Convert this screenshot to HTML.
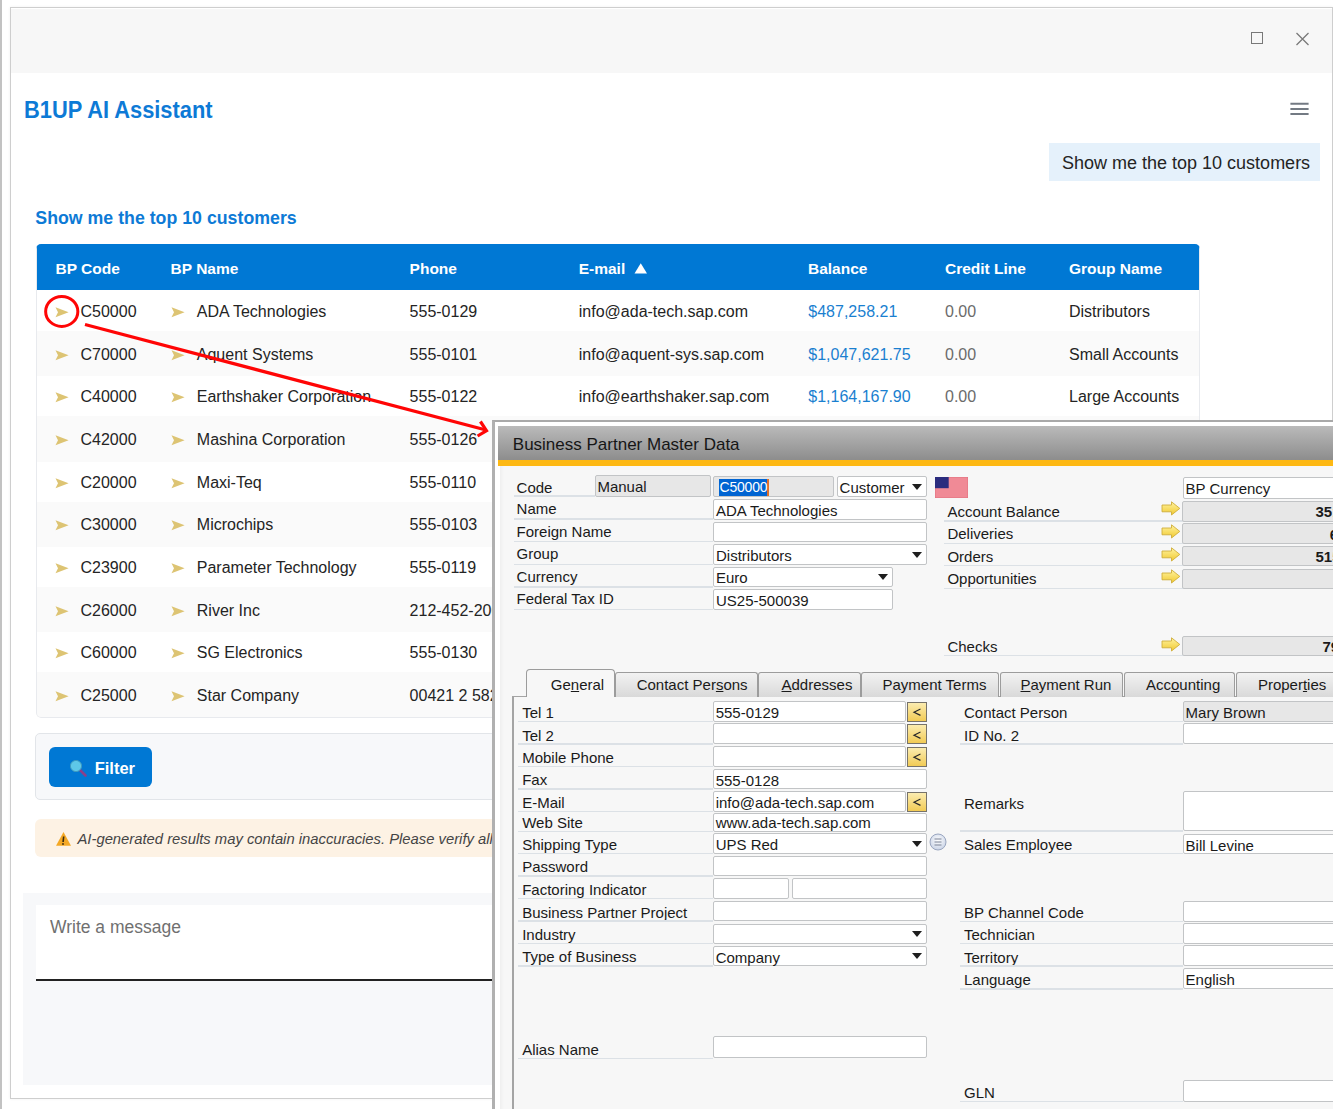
<!DOCTYPE html>
<html><head><meta charset="utf-8">
<style>
*{box-sizing:border-box;margin:0;padding:0}
html,body{width:1333px;height:1109px;overflow:hidden;background:#fff;font-family:"Liberation Sans",sans-serif;color:#242424}
.a{position:absolute}
.t{position:absolute;white-space:nowrap;line-height:1}
/* chat window */
#leftline{left:0;top:0;width:2px;height:1109px;background:#c2c2c2}
#win{left:9.5px;top:7.1px;width:1323.7px;height:1091.9px;border:1.6px solid #cecece;background:#fff;box-shadow:0 0 3px rgba(0,0,0,0.06)}
#titlebar{left:11px;top:8.6px;width:1320.8px;height:64.4px;background:#f7f7f7}
.hd{font-weight:bold;font-size:15.5px;color:#fff}
.bd{font-size:16px;color:#242424}
.arr{position:absolute;width:14px;height:11px}
.row{position:absolute;left:37px;width:1161px;height:42.67px}
.g{background:#fafafa}
/* sap */
.sl{position:absolute;font-size:15px;color:#1a1a1a;white-space:nowrap;line-height:1}
.ul{position:absolute;height:1.4px;background:#dce1e6}
.fld{position:absolute;background:#fff;border:1.6px solid #c2c4c6;border-radius:2px}
.fg{background:#e7e7e7}
.ft{position:absolute;font-size:15px;color:#1a1a1a;white-space:nowrap;line-height:1}
.dd{position:absolute;width:0;height:0;border-left:5.6px solid transparent;border-right:5.6px solid transparent;border-top:6.6px solid #1e1e1e}
.yb{position:absolute;width:20px;height:20px;background:linear-gradient(#fbecb0,#f2cb55);border:1.4px solid #77736a;font-size:13px;color:#333;text-align:center;line-height:18px}
.ya{position:absolute;width:19px;height:15px}
.tab{position:absolute;top:673px;height:24px;border:1px solid #a0a0a0;border-bottom:none;border-radius:4px 4px 0 0;background:linear-gradient(#f7f7f7,#dcdcdc);font-size:15px;color:#1a1a1a;text-align:center;line-height:22px;white-space:nowrap}
</style></head><body>
<div id="leftline" class="a"></div>
<div id="win" class="a"></div>
<div id="titlebar" class="a"></div>
<!-- window buttons -->
<div class="a" style="left:1251.4px;top:32.2px;width:12.1px;height:12.3px;border:1.6px solid #787878"></div>
<svg class="a" style="left:1295px;top:31.5px" width="15" height="14" viewBox="0 0 15 14"><path d="M1.5 1 L13.5 13 M13.5 1 L1.5 13" stroke="#7a7a7a" stroke-width="1.3"/></svg>

<div class="t" style="left:24px;top:99.8px;font-size:21.85px;font-weight:bold;color:#0d7ad6;transform:scaleY(1.09);transform-origin:0 18.3px">B1UP AI Assistant</div>
<svg class="a" style="left:1289px;top:101px" width="21" height="16" viewBox="0 0 21 16"><path d="M1.4 2.8H19.6M1.4 8H19.6M1.4 13H19.6" stroke="#737a83" stroke-width="2"/></svg>

<div class="a" style="left:1049px;top:143.2px;width:271px;height:37.6px;background:#e5f1fb"></div>
<div class="t" style="left:1062px;top:154px;font-size:18px;color:#242424">Show me the top 10 customers</div>

<div class="t" style="left:35.3px;top:210px;font-size:17.75px;font-weight:bold;color:#0d7ad6;transform:scaleY(1.05);transform-origin:0 15px">Show me the top 10 customers</div>

<!-- TABLE -->
<div class="a" style="left:35.5px;top:244px;width:1164.3px;height:473.5px;border-radius:5px;overflow:hidden;background:#fff">
<div class="a" style="left:0;width:1164.3px;top:86.87px;height:45.47px;background:#fafafa"></div>
<div class="a" style="left:0;width:1164.3px;top:172.21px;height:45.47px;background:#fafafa"></div>
<div class="a" style="left:0;width:1164.3px;top:257.55px;height:45.47px;background:#fafafa"></div>
<div class="a" style="left:0;width:1164.3px;top:342.89px;height:45.47px;background:#fafafa"></div>
<div class="a" style="left:0;width:1164.3px;top:428.23px;height:45.47px;background:#fafafa"></div>
<div class="a" style="left:0;top:0;width:1164.3px;height:46.3px;background:#0078d4"></div>
<div class="a" style="left:0;top:0;width:1164.3px;height:473.5px;border:1.5px solid #e8eaee;border-top:none;border-radius:0 0 5px 5px;"></div>
</div>
<div class="t hd" style="left:55.5px;top:260.5px">BP Code</div>
<div class="t hd" style="left:170.6px;top:260.5px">BP Name</div>
<div class="t hd" style="left:409.6px;top:260.5px">Phone</div>
<div class="t hd" style="left:578.7px;top:260.5px">E-mail</div>
<div class="t hd" style="left:808px;top:260.5px">Balance</div>
<div class="t hd" style="left:945px;top:260.5px">Credit Line</div>
<div class="t hd" style="left:1069px;top:260.5px">Group Name</div>
<svg class="a" style="left:633.7px;top:263.2px" width="13.5" height="11" viewBox="0 0 13.5 11"><path d="M0.5 10.5 L6.75 0.3 L13 10.5 Z" fill="#fff"/></svg>
<svg class="a" style="left:55px;top:306.83px" width="14" height="11" viewBox="0 0 14 11"><path d="M0.5 0.3 L13.6 5.3 L0.5 10.2 L3 5.3 Z" fill="#ddc473"/></svg>
<svg class="a" style="left:171px;top:306.83px" width="14" height="11" viewBox="0 0 14 11"><path d="M0.5 0.3 L13.6 5.3 L0.5 10.2 L3 5.3 Z" fill="#ddc473"/></svg>
<div class="t bd" style="left:80.5px;top:303.83px">C50000</div>
<div class="t bd" style="left:196.8px;top:303.83px">ADA Technologies</div>
<div class="t bd" style="left:409.6px;top:303.83px">555-0129</div>
<div class="t bd" style="left:578.8px;top:303.83px">info@ada-tech.sap.com</div>
<div class="t bd" style="left:808.3px;top:303.83px;color:#1a7fd0">$487,258.21</div>
<div class="t bd" style="left:945px;top:303.83px;color:#6b6b6b">0.00</div>
<div class="t bd" style="left:1069px;top:303.83px">Distributors</div>
<svg class="a" style="left:55px;top:349.50px" width="14" height="11" viewBox="0 0 14 11"><path d="M0.5 0.3 L13.6 5.3 L0.5 10.2 L3 5.3 Z" fill="#ddc473"/></svg>
<svg class="a" style="left:171px;top:349.50px" width="14" height="11" viewBox="0 0 14 11"><path d="M0.5 0.3 L13.6 5.3 L0.5 10.2 L3 5.3 Z" fill="#ddc473"/></svg>
<div class="t bd" style="left:80.5px;top:346.50px">C70000</div>
<div class="t bd" style="left:196.8px;top:346.50px">Aquent Systems</div>
<div class="t bd" style="left:409.6px;top:346.50px">555-0101</div>
<div class="t bd" style="left:578.8px;top:346.50px">info@aquent-sys.sap.com</div>
<div class="t bd" style="left:808.3px;top:346.50px;color:#1a7fd0">$1,047,621.75</div>
<div class="t bd" style="left:945px;top:346.50px;color:#6b6b6b">0.00</div>
<div class="t bd" style="left:1069px;top:346.50px">Small Accounts</div>
<svg class="a" style="left:55px;top:392.18px" width="14" height="11" viewBox="0 0 14 11"><path d="M0.5 0.3 L13.6 5.3 L0.5 10.2 L3 5.3 Z" fill="#ddc473"/></svg>
<svg class="a" style="left:171px;top:392.18px" width="14" height="11" viewBox="0 0 14 11"><path d="M0.5 0.3 L13.6 5.3 L0.5 10.2 L3 5.3 Z" fill="#ddc473"/></svg>
<div class="t bd" style="left:80.5px;top:389.18px">C40000</div>
<div class="t bd" style="left:196.8px;top:389.18px">Earthshaker Corporation</div>
<div class="t bd" style="left:409.6px;top:389.18px">555-0122</div>
<div class="t bd" style="left:578.8px;top:389.18px">info@earthshaker.sap.com</div>
<div class="t bd" style="left:808.3px;top:389.18px;color:#1a7fd0">$1,164,167.90</div>
<div class="t bd" style="left:945px;top:389.18px;color:#6b6b6b">0.00</div>
<div class="t bd" style="left:1069px;top:389.18px">Large Accounts</div>
<svg class="a" style="left:55px;top:434.84px" width="14" height="11" viewBox="0 0 14 11"><path d="M0.5 0.3 L13.6 5.3 L0.5 10.2 L3 5.3 Z" fill="#ddc473"/></svg>
<svg class="a" style="left:171px;top:434.84px" width="14" height="11" viewBox="0 0 14 11"><path d="M0.5 0.3 L13.6 5.3 L0.5 10.2 L3 5.3 Z" fill="#ddc473"/></svg>
<div class="t bd" style="left:80.5px;top:431.84px">C42000</div>
<div class="t bd" style="left:196.8px;top:431.84px">Mashina Corporation</div>
<div class="t bd" style="left:409.6px;top:431.84px">555-0126</div>
<div class="t bd" style="left:578.8px;top:431.84px">info@mashina.sap.com</div>
<div class="t bd" style="left:808.3px;top:431.84px;color:#1a7fd0">$1,030,441.30</div>
<div class="t bd" style="left:945px;top:431.84px;color:#6b6b6b">0.00</div>
<div class="t bd" style="left:1069px;top:431.84px">Large Accounts</div>
<svg class="a" style="left:55px;top:477.51px" width="14" height="11" viewBox="0 0 14 11"><path d="M0.5 0.3 L13.6 5.3 L0.5 10.2 L3 5.3 Z" fill="#ddc473"/></svg>
<svg class="a" style="left:171px;top:477.51px" width="14" height="11" viewBox="0 0 14 11"><path d="M0.5 0.3 L13.6 5.3 L0.5 10.2 L3 5.3 Z" fill="#ddc473"/></svg>
<div class="t bd" style="left:80.5px;top:474.51px">C20000</div>
<div class="t bd" style="left:196.8px;top:474.51px">Maxi-Teq</div>
<div class="t bd" style="left:409.6px;top:474.51px">555-0110</div>
<div class="t bd" style="left:578.8px;top:474.51px">info@maxi-teq.sap.com</div>
<div class="t bd" style="left:808.3px;top:474.51px;color:#1a7fd0">$1,114,050.46</div>
<div class="t bd" style="left:945px;top:474.51px;color:#6b6b6b">0.00</div>
<div class="t bd" style="left:1069px;top:474.51px">Large Accounts</div>
<svg class="a" style="left:55px;top:520.19px" width="14" height="11" viewBox="0 0 14 11"><path d="M0.5 0.3 L13.6 5.3 L0.5 10.2 L3 5.3 Z" fill="#ddc473"/></svg>
<svg class="a" style="left:171px;top:520.19px" width="14" height="11" viewBox="0 0 14 11"><path d="M0.5 0.3 L13.6 5.3 L0.5 10.2 L3 5.3 Z" fill="#ddc473"/></svg>
<div class="t bd" style="left:80.5px;top:517.19px">C30000</div>
<div class="t bd" style="left:196.8px;top:517.19px">Microchips</div>
<div class="t bd" style="left:409.6px;top:517.19px">555-0103</div>
<div class="t bd" style="left:578.8px;top:517.19px">info@microchips.sap.com</div>
<div class="t bd" style="left:808.3px;top:517.19px;color:#1a7fd0">$1,221,305.68</div>
<div class="t bd" style="left:945px;top:517.19px;color:#6b6b6b">0.00</div>
<div class="t bd" style="left:1069px;top:517.19px">Large Accounts</div>
<svg class="a" style="left:55px;top:562.86px" width="14" height="11" viewBox="0 0 14 11"><path d="M0.5 0.3 L13.6 5.3 L0.5 10.2 L3 5.3 Z" fill="#ddc473"/></svg>
<svg class="a" style="left:171px;top:562.86px" width="14" height="11" viewBox="0 0 14 11"><path d="M0.5 0.3 L13.6 5.3 L0.5 10.2 L3 5.3 Z" fill="#ddc473"/></svg>
<div class="t bd" style="left:80.5px;top:559.86px">C23900</div>
<div class="t bd" style="left:196.8px;top:559.86px">Parameter Technology</div>
<div class="t bd" style="left:409.6px;top:559.86px">555-0119</div>
<div class="t bd" style="left:578.8px;top:559.86px">info@parameter.sap.com</div>
<div class="t bd" style="left:808.3px;top:559.86px;color:#1a7fd0">$1,044,917.22</div>
<div class="t bd" style="left:945px;top:559.86px;color:#6b6b6b">0.00</div>
<div class="t bd" style="left:1069px;top:559.86px">Large Accounts</div>
<svg class="a" style="left:55px;top:605.53px" width="14" height="11" viewBox="0 0 14 11"><path d="M0.5 0.3 L13.6 5.3 L0.5 10.2 L3 5.3 Z" fill="#ddc473"/></svg>
<svg class="a" style="left:171px;top:605.53px" width="14" height="11" viewBox="0 0 14 11"><path d="M0.5 0.3 L13.6 5.3 L0.5 10.2 L3 5.3 Z" fill="#ddc473"/></svg>
<div class="t bd" style="left:80.5px;top:602.53px">C26000</div>
<div class="t bd" style="left:196.8px;top:602.53px">River Inc</div>
<div class="t bd" style="left:409.6px;top:602.53px">212-452-2000</div>
<div class="t bd" style="left:578.8px;top:602.53px">info@river.sap.com</div>
<div class="t bd" style="left:808.3px;top:602.53px;color:#1a7fd0">$1,061,221.05</div>
<div class="t bd" style="left:945px;top:602.53px;color:#6b6b6b">0.00</div>
<div class="t bd" style="left:1069px;top:602.53px">Large Accounts</div>
<svg class="a" style="left:55px;top:648.20px" width="14" height="11" viewBox="0 0 14 11"><path d="M0.5 0.3 L13.6 5.3 L0.5 10.2 L3 5.3 Z" fill="#ddc473"/></svg>
<svg class="a" style="left:171px;top:648.20px" width="14" height="11" viewBox="0 0 14 11"><path d="M0.5 0.3 L13.6 5.3 L0.5 10.2 L3 5.3 Z" fill="#ddc473"/></svg>
<div class="t bd" style="left:80.5px;top:645.20px">C60000</div>
<div class="t bd" style="left:196.8px;top:645.20px">SG Electronics</div>
<div class="t bd" style="left:409.6px;top:645.20px">555-0130</div>
<div class="t bd" style="left:578.8px;top:645.20px">info@sg-elec.sap.com</div>
<div class="t bd" style="left:808.3px;top:645.20px;color:#1a7fd0">$1,090,511.08</div>
<div class="t bd" style="left:945px;top:645.20px;color:#6b6b6b">0.00</div>
<div class="t bd" style="left:1069px;top:645.20px">Large Accounts</div>
<svg class="a" style="left:55px;top:690.87px" width="14" height="11" viewBox="0 0 14 11"><path d="M0.5 0.3 L13.6 5.3 L0.5 10.2 L3 5.3 Z" fill="#ddc473"/></svg>
<svg class="a" style="left:171px;top:690.87px" width="14" height="11" viewBox="0 0 14 11"><path d="M0.5 0.3 L13.6 5.3 L0.5 10.2 L3 5.3 Z" fill="#ddc473"/></svg>
<div class="t bd" style="left:80.5px;top:687.87px">C25000</div>
<div class="t bd" style="left:196.8px;top:687.87px">Star Company</div>
<div class="t bd" style="left:409.6px;top:687.87px">00421 2 5822 1111</div>
<div class="t bd" style="left:578.8px;top:687.87px">info@star.sap.com</div>
<div class="t bd" style="left:808.3px;top:687.87px;color:#1a7fd0">$1,120,314.40</div>
<div class="t bd" style="left:945px;top:687.87px;color:#6b6b6b">0.00</div>
<div class="t bd" style="left:1069px;top:687.87px">Large Accounts</div>

<!-- SAP -->

<!-- filter -->
<div class="a" style="left:35.3px;top:733.3px;width:1164px;height:67px;background:#f7f8fa;border:1px solid #e2e5e9;border-radius:5px"></div>
<div class="a" style="left:48.5px;top:746.5px;width:103.6px;height:40.4px;background:#0078d4;border-radius:6px"></div>
<svg class="a" style="left:66px;top:756px" width="22" height="22" viewBox="0 0 22 22"><path d="M13.5 13.5 L19.5 19.5" stroke="#8a3f8a" stroke-width="2.6" stroke-linecap="round"/><circle cx="10" cy="10" r="5.6" fill="#5ec8e8" stroke="#3d9ac0" stroke-width="1"/></svg>
<div class="t" style="left:94.7px;top:759.5px;font-size:16.5px;font-weight:bold;color:#fff">Filter</div>
<!-- warning -->
<div class="a" style="left:35.3px;top:818.7px;width:1164px;height:38.3px;background:#fdf2e4;border-radius:6px"></div>
<svg class="a" style="left:55px;top:831px" width="17" height="16" viewBox="0 0 17 16"><path d="M8.5 1 L16 14.8 L1 14.8 Z" fill="#f4a825"/><path d="M8.7 5.5 L8.1 11" stroke="#3a2a10" stroke-width="1.6"/><circle cx="8" cy="13" r="0.9" fill="#3a2a10"/></svg>
<div class="t" style="left:77.5px;top:831.7px;font-size:14.8px;font-style:italic;color:#444444">AI-generated results may contain inaccuracies. Please verify all important information.</div>
<!-- message -->
<div class="a" style="left:23.2px;top:893.4px;width:1297px;height:191.6px;background:#f7f8fa"></div>
<div class="a" style="left:35.6px;top:905px;width:1272px;height:76px;background:#fff;border-bottom:2.5px solid #222"></div>
<div class="t" style="left:50px;top:919px;font-size:17.5px;color:#707070">Write a message</div>

<div class="a" style="left:492.4px;top:419.9px;width:860px;height:700px;background:#fff;border-left:3.3px solid #b0b0b0;border-top:2.6px solid #a9a9a9"></div>
<div class="a" style="left:498.4px;top:425.6px;width:840px;height:34.2px;background:linear-gradient(#bababa,#8d8d8d)"></div>
<div class="a" style="left:498.4px;top:459.8px;width:840px;height:6.2px;background:#fdb813"></div>
<div class="t" style="left:512.8px;top:436.41px;font-size:17px;color:#161616">Business Partner Master Data</div>
<div class="a" style="left:499.9px;top:466px;width:840px;height:650px;background:#f7f7f7"></div>
<div class="a" style="left:499.9px;top:466px;width:4.5px;height:650px;background:linear-gradient(90deg,#efefef,#f7f7f7)"></div>
<div class="sl" style="left:516.6px;top:480.40px;">Code</div>
<div class="sl" style="left:516.6px;top:500.80px;">Name</div>
<div class="sl" style="left:516.6px;top:523.50px;">Foreign Name</div>
<div class="sl" style="left:516.6px;top:546.10px;">Group</div>
<div class="sl" style="left:516.6px;top:568.70px;">Currency</div>
<div class="sl" style="left:516.6px;top:591.20px;">Federal Tax ID</div>
<div class="ul" style="left:513.6px;top:495.25px;width:81.40px"></div>
<div class="ul" style="left:513.6px;top:518.25px;width:199.40px"></div>
<div class="ul" style="left:513.6px;top:541.05px;width:199.40px"></div>
<div class="ul" style="left:513.6px;top:563.65px;width:199.40px"></div>
<div class="ul" style="left:513.6px;top:586.15px;width:199.40px"></div>
<div class="ul" style="left:513.6px;top:608.75px;width:199.40px"></div>
<div class="fld fg" style="left:594.60px;top:475.30px;width:116.60px;height:21.90px"></div>
<div class="ft" style="left:597.40px;top:479.10px;color:#1a1a1a;">Manual</div>
<div class="fld fg" style="left:713.20px;top:475.90px;width:121.00px;height:21.50px"></div>
<div class="a" style="left:719.3px;top:478.8px;width:48.3px;height:16.8px;background:#0064d2"></div>
<div class="a" style="left:767.2px;top:478.8px;width:1.5px;height:16.8px;background:#e0702a"></div>
<div class="ft" style="left:719.5px;top:479.95px;color:#fff;font-size:14px;letter-spacing:-0.2px">C50000</div>
<div class="fld" style="left:836.80px;top:475.90px;width:90.50px;height:21.50px"></div>
<div class="ft" style="left:839.60px;top:479.70px;color:#1a1a1a;">Customer</div>
<div class="dd" style="left:912.10px;top:483.75px"></div>
<svg class="a" style="left:935px;top:476.7px" width="33" height="21" viewBox="0 0 33 21"><rect width="33" height="21" fill="#f08a96"/><rect x="0" y="0" width="33" height="21" fill="none" stroke="#e0707e" stroke-width="1"/><rect width="13.7" height="11.2" fill="#2b2c7e"/></svg>
<div class="fld" style="left:713.20px;top:499.20px;width:214.10px;height:20.70px"></div>
<div class="ft" style="left:716.00px;top:503.00px;color:#1a1a1a;">ADA Technologies</div>
<div class="fld" style="left:713.20px;top:521.70px;width:214.10px;height:20.60px"></div>
<div class="fld" style="left:713.20px;top:544.00px;width:214.10px;height:21.10px"></div>
<div class="ft" style="left:716.00px;top:547.80px;color:#1a1a1a;">Distributors</div>
<div class="dd" style="left:912.10px;top:551.65px"></div>
<div class="fld" style="left:713.20px;top:566.50px;width:179.90px;height:20.70px"></div>
<div class="ft" style="left:716.00px;top:570.30px;color:#1a1a1a;">Euro</div>
<div class="dd" style="left:877.90px;top:573.95px"></div>
<div class="fld" style="left:713.20px;top:588.90px;width:179.90px;height:20.90px"></div>
<div class="ft" style="left:716.00px;top:592.70px;color:#1a1a1a;">US25-500039</div>
<div class="fld" style="left:1182.80px;top:477.30px;width:177.90px;height:21.50px"></div>
<div class="ft" style="left:1185.60px;top:481.10px;color:#1a1a1a;">BP Currency</div>
<div class="sl" style="left:947.4px;top:504.30px;">Account Balance</div>
<div class="ul" style="left:944.4px;top:520.35px;width:238.60px"></div>
<svg class="a" style="left:1160.5px;top:501.40px" width="20" height="15" viewBox="0 0 20 15"><defs><linearGradient id="yg" x1="0" y1="0" x2="0" y2="1"><stop offset="0" stop-color="#fff3a0"/><stop offset="1" stop-color="#f1c930"/></linearGradient></defs><path d="M1 4 H10.5 V0.8 L18.8 7.4 L10.5 14 V10.8 H1 Z" fill="url(#yg)" stroke="#cfae3a" stroke-width="0.9"/></svg>
<div class="fld fg" style="left:1182.40px;top:500.90px;width:178.30px;height:20.70px"></div>
<div class="ft" style="left:1315.50px;top:504.10px;font-weight:bold">351,112.96</div>
<div class="sl" style="left:947.4px;top:526.30px;">Deliveries</div>
<div class="ul" style="left:944.4px;top:542.85px;width:238.60px"></div>
<svg class="a" style="left:1160.5px;top:523.90px" width="20" height="15" viewBox="0 0 20 15"><defs><linearGradient id="yg" x1="0" y1="0" x2="0" y2="1"><stop offset="0" stop-color="#fff3a0"/><stop offset="1" stop-color="#f1c930"/></linearGradient></defs><path d="M1 4 H10.5 V0.8 L18.8 7.4 L10.5 14 V10.8 H1 Z" fill="url(#yg)" stroke="#cfae3a" stroke-width="0.9"/></svg>
<div class="fld fg" style="left:1182.40px;top:523.40px;width:178.30px;height:20.70px"></div>
<div class="ft" style="left:1329.80px;top:526.60px;font-weight:bold">6</div>
<div class="sl" style="left:947.4px;top:548.80px;">Orders</div>
<div class="ul" style="left:944.4px;top:565.05px;width:238.60px"></div>
<svg class="a" style="left:1160.5px;top:546.50px" width="20" height="15" viewBox="0 0 20 15"><defs><linearGradient id="yg" x1="0" y1="0" x2="0" y2="1"><stop offset="0" stop-color="#fff3a0"/><stop offset="1" stop-color="#f1c930"/></linearGradient></defs><path d="M1 4 H10.5 V0.8 L18.8 7.4 L10.5 14 V10.8 H1 Z" fill="url(#yg)" stroke="#cfae3a" stroke-width="0.9"/></svg>
<div class="fld fg" style="left:1182.40px;top:546.00px;width:178.30px;height:20.30px"></div>
<div class="ft" style="left:1315.50px;top:549.20px;font-weight:bold">515,212.58</div>
<div class="sl" style="left:947.4px;top:571.30px;">Opportunities</div>
<div class="ul" style="left:944.4px;top:587.65px;width:238.60px"></div>
<svg class="a" style="left:1160.5px;top:569.00px" width="20" height="15" viewBox="0 0 20 15"><defs><linearGradient id="yg" x1="0" y1="0" x2="0" y2="1"><stop offset="0" stop-color="#fff3a0"/><stop offset="1" stop-color="#f1c930"/></linearGradient></defs><path d="M1 4 H10.5 V0.8 L18.8 7.4 L10.5 14 V10.8 H1 Z" fill="url(#yg)" stroke="#cfae3a" stroke-width="0.9"/></svg>
<div class="fld fg" style="left:1182.40px;top:568.50px;width:178.30px;height:20.40px"></div>
<div class="sl" style="left:947.4px;top:638.90px;">Checks</div>
<div class="ul" style="left:944.4px;top:655.05px;width:238.60px"></div>
<svg class="a" style="left:1160.5px;top:636.50px" width="20" height="15" viewBox="0 0 20 15"><defs><linearGradient id="yg" x1="0" y1="0" x2="0" y2="1"><stop offset="0" stop-color="#fff3a0"/><stop offset="1" stop-color="#f1c930"/></linearGradient></defs><path d="M1 4 H10.5 V0.8 L18.8 7.4 L10.5 14 V10.8 H1 Z" fill="url(#yg)" stroke="#cfae3a" stroke-width="0.9"/></svg>
<div class="fld fg" style="left:1182.40px;top:636.00px;width:178.30px;height:20.30px"></div>
<div class="ft" style="left:1322.50px;top:639.20px;font-weight:bold">79,000.00</div>
<div class="a" style="left:512.8px;top:696px;width:830px;height:1.2px;background:#a4a4a4"></div>
<div class="a" style="left:512.3px;top:696px;width:1.5px;height:420px;background:#a4a4a4"></div>
<div class="a" style="left:614.6px;top:672.3px;width:143.00px;height:24.5px;border:1px solid #9c9c9c;border-bottom:none;border-radius:3px 3px 0 0;background:linear-gradient(#f2f2f2,#d9d9d9)"></div>
<div class="sl" style="left:636.7px;top:676.60px">Contact Per<u>s</u>ons</div>
<div class="a" style="left:758.2px;top:672.3px;width:102.60px;height:24.5px;border:1px solid #9c9c9c;border-bottom:none;border-radius:3px 3px 0 0;background:linear-gradient(#f2f2f2,#d9d9d9)"></div>
<div class="sl" style="left:781.5px;top:676.60px"><u>A</u>ddresses</div>
<div class="a" style="left:861.4px;top:672.3px;width:137.60px;height:24.5px;border:1px solid #9c9c9c;border-bottom:none;border-radius:3px 3px 0 0;background:linear-gradient(#f2f2f2,#d9d9d9)"></div>
<div class="sl" style="left:882.5px;top:676.60px">Payment Terms</div>
<div class="a" style="left:999.5px;top:672.3px;width:123.50px;height:24.5px;border:1px solid #9c9c9c;border-bottom:none;border-radius:3px 3px 0 0;background:linear-gradient(#f2f2f2,#d9d9d9)"></div>
<div class="sl" style="left:1020.5px;top:676.60px"><u>P</u>ayment Run</div>
<div class="a" style="left:1123.5px;top:672.3px;width:111.50px;height:24.5px;border:1px solid #9c9c9c;border-bottom:none;border-radius:3px 3px 0 0;background:linear-gradient(#f2f2f2,#d9d9d9)"></div>
<div class="sl" style="left:1146px;top:676.60px">Acc<u>o</u>unting</div>
<div class="a" style="left:1235.5px;top:672.3px;width:109.50px;height:24.5px;border:1px solid #9c9c9c;border-bottom:none;border-radius:3px 3px 0 0;background:linear-gradient(#f2f2f2,#d9d9d9)"></div>
<div class="sl" style="left:1257.9px;top:676.60px">Proper<u>t</u>ies</div>
<div class="a" style="left:526px;top:668.7px;width:88.6px;height:28.8px;border:1px solid #9c9c9c;border-bottom:none;border-radius:4px 4px 0 0;background:#f7f7f7"></div>
<div class="sl" style="left:550.8px;top:677.00px">Ge<u>n</u>eral</div>
<div class="sl" style="left:522.2px;top:705.00px;">Tel 1</div>
<div class="ul" style="left:517.7px;top:720.95px;width:195.30px"></div>
<div class="fld" style="left:712.90px;top:701.00px;width:193.10px;height:21.30px"></div>
<div class="ft" style="left:715.70px;top:704.80px;color:#1a1a1a;">555-0129</div>
<div class="yb" style="left:906.5px;top:702.00px;height:19.80px;width:20.8px"></div>
<svg class="a" style="left:911px;top:706.30px" width="12" height="12" viewBox="0 0 12 12"><path d="M9.5 3 L3 6.2 L9.5 9.4" fill="none" stroke="#2a2a2a" stroke-width="1.2"/></svg>
<div class="sl" style="left:522.2px;top:727.50px;">Tel 2</div>
<div class="ul" style="left:517.7px;top:743.45px;width:195.30px"></div>
<div class="fld" style="left:712.90px;top:723.30px;width:193.10px;height:21.20px"></div>
<div class="yb" style="left:906.5px;top:724.30px;height:19.70px;width:20.8px"></div>
<svg class="a" style="left:911px;top:728.60px" width="12" height="12" viewBox="0 0 12 12"><path d="M9.5 3 L3 6.2 L9.5 9.4" fill="none" stroke="#2a2a2a" stroke-width="1.2"/></svg>
<div class="sl" style="left:522.2px;top:750.00px;">Mobile Phone</div>
<div class="ul" style="left:517.7px;top:765.95px;width:195.30px"></div>
<div class="fld" style="left:712.90px;top:745.90px;width:193.10px;height:21.30px"></div>
<div class="yb" style="left:906.5px;top:746.90px;height:19.80px;width:20.8px"></div>
<svg class="a" style="left:911px;top:751.20px" width="12" height="12" viewBox="0 0 12 12"><path d="M9.5 3 L3 6.2 L9.5 9.4" fill="none" stroke="#2a2a2a" stroke-width="1.2"/></svg>
<div class="sl" style="left:522.2px;top:772.30px;">Fax</div>
<div class="ul" style="left:517.7px;top:788.25px;width:195.30px"></div>
<div class="fld" style="left:712.90px;top:768.70px;width:214.40px;height:20.80px"></div>
<div class="ft" style="left:715.70px;top:772.50px;color:#1a1a1a;">555-0128</div>
<div class="sl" style="left:522.2px;top:794.80px;">E-Mail</div>
<div class="ul" style="left:517.7px;top:810.75px;width:195.30px"></div>
<div class="fld" style="left:712.90px;top:790.90px;width:193.10px;height:21.30px"></div>
<div class="ft" style="left:715.70px;top:794.70px;color:#1a1a1a;">info@ada-tech.sap.com</div>
<div class="yb" style="left:906.5px;top:791.90px;height:19.80px;width:20.8px"></div>
<svg class="a" style="left:911px;top:796.20px" width="12" height="12" viewBox="0 0 12 12"><path d="M9.5 3 L3 6.2 L9.5 9.4" fill="none" stroke="#2a2a2a" stroke-width="1.2"/></svg>
<div class="sl" style="left:522.2px;top:814.80px;">Web Site</div>
<div class="ul" style="left:517.7px;top:830.75px;width:195.30px"></div>
<div class="fld" style="left:712.90px;top:813.20px;width:214.40px;height:18.50px"></div>
<div class="ft" style="left:715.70px;top:815.40px;color:#1a1a1a;">www.ada-tech.sap.com</div>
<div class="sl" style="left:522.2px;top:836.80px;">Shipping Type</div>
<div class="ul" style="left:517.7px;top:852.75px;width:195.30px"></div>
<div class="fld" style="left:712.90px;top:833.20px;width:214.40px;height:20.70px"></div>
<div class="ft" style="left:715.70px;top:837.00px;color:#1a1a1a;">UPS Red</div>
<div class="dd" style="left:912.10px;top:840.65px"></div>
<div class="sl" style="left:522.2px;top:859.30px;">Password</div>
<div class="ul" style="left:517.7px;top:875.25px;width:195.30px"></div>
<div class="fld" style="left:712.90px;top:856.00px;width:214.40px;height:20.20px"></div>
<div class="sl" style="left:522.2px;top:882.10px;">Factoring Indicator</div>
<div class="ul" style="left:517.7px;top:898.05px;width:195.30px"></div>
<div class="fld" style="left:712.90px;top:878.40px;width:75.80px;height:20.90px"></div>
<div class="fld" style="left:791.60px;top:878.40px;width:135.70px;height:20.90px"></div>
<div class="sl" style="left:522.2px;top:904.50px;">Business Partner Project</div>
<div class="ul" style="left:517.7px;top:920.45px;width:195.30px"></div>
<div class="fld" style="left:712.90px;top:900.70px;width:214.40px;height:20.80px"></div>
<div class="sl" style="left:522.2px;top:926.90px;">Industry</div>
<div class="ul" style="left:517.7px;top:942.85px;width:195.30px"></div>
<div class="fld" style="left:712.90px;top:923.70px;width:214.40px;height:20.20px"></div>
<div class="dd" style="left:912.10px;top:930.90px"></div>
<div class="sl" style="left:522.2px;top:949.30px;">Type of Business</div>
<div class="ul" style="left:517.7px;top:965.25px;width:195.30px"></div>
<div class="fld" style="left:712.90px;top:946.10px;width:214.40px;height:20.40px"></div>
<div class="ft" style="left:715.70px;top:949.90px;color:#1a1a1a;">Company</div>
<div class="dd" style="left:912.10px;top:953.40px"></div>
<div class="sl" style="left:522.2px;top:1041.60px;">Alias Name</div>
<div class="ul" style="left:517.7px;top:1057.55px;width:195.30px"></div>
<div class="fld" style="left:712.90px;top:1036.20px;width:214.40px;height:22.30px"></div>
<svg class="a" style="left:929px;top:833.3px" width="18" height="18" viewBox="0 0 18 18"><defs><radialGradient id="cg" cx="0.5" cy="0.4" r="0.6"><stop offset="0" stop-color="#ffffff"/><stop offset="1" stop-color="#c9d3e6"/></radialGradient></defs><circle cx="9" cy="9" r="8" fill="url(#cg)" stroke="#9aa6c0" stroke-width="1"/><path d="M5.5 6H12.5M5.5 9H12.5M5.5 12H12.5" stroke="#7a8296" stroke-width="1"/></svg>
<div class="sl" style="left:964px;top:705.10px;">Contact Person</div>
<div class="ul" style="left:960px;top:721.05px;width:223.00px"></div>
<div class="fld fg" style="left:1182.80px;top:701.00px;width:177.90px;height:21.30px"></div>
<div class="ft" style="left:1185.60px;top:704.80px;color:#1a1a1a;">Mary Brown</div>
<div class="sl" style="left:964px;top:727.50px;">ID No. 2</div>
<div class="ul" style="left:960px;top:743.45px;width:223.00px"></div>
<div class="fld" style="left:1182.80px;top:723.30px;width:177.90px;height:21.20px"></div>
<div class="sl" style="left:964px;top:795.80px;">Remarks</div>
<div class="ul" style="left:960px;top:830.25px;width:223.00px"></div>
<div class="fld" style="left:1182.80px;top:791.10px;width:177.90px;height:40.10px"></div>
<div class="sl" style="left:964px;top:836.90px;">Sales Employee</div>
<div class="ul" style="left:960px;top:852.85px;width:223.00px"></div>
<div class="fld" style="left:1182.80px;top:833.70px;width:177.90px;height:20.20px"></div>
<div class="ft" style="left:1185.60px;top:837.50px;color:#1a1a1a;">Bill Levine</div>
<div class="sl" style="left:964px;top:904.60px;">BP Channel Code</div>
<div class="ul" style="left:960px;top:920.55px;width:223.00px"></div>
<div class="fld" style="left:1182.80px;top:900.70px;width:177.90px;height:21.10px"></div>
<div class="sl" style="left:964px;top:927.10px;">Technician</div>
<div class="ul" style="left:960px;top:943.05px;width:223.00px"></div>
<div class="fld" style="left:1182.80px;top:923.00px;width:177.90px;height:21.10px"></div>
<div class="sl" style="left:964px;top:949.50px;">Territory</div>
<div class="ul" style="left:960px;top:965.45px;width:223.00px"></div>
<div class="fld" style="left:1182.80px;top:945.40px;width:177.90px;height:21.10px"></div>
<div class="sl" style="left:964px;top:972.20px;">Language</div>
<div class="ul" style="left:960px;top:988.15px;width:223.00px"></div>
<div class="fld" style="left:1182.80px;top:967.70px;width:177.90px;height:21.60px"></div>
<div class="ft" style="left:1185.60px;top:971.50px;color:#1a1a1a;">English</div>
<div class="sl" style="left:964px;top:1084.80px;">GLN</div>
<div class="ul" style="left:960px;top:1100.75px;width:223.00px"></div>
<div class="fld" style="left:1182.80px;top:1080.00px;width:177.90px;height:21.90px"></div>

<!-- annotation -->
<svg class="a" style="left:0;top:0" width="1333" height="1109" viewBox="0 0 1333 1109">
<ellipse cx="61.75" cy="311.4" rx="16.1" ry="15" fill="none" stroke="#ff0505" stroke-width="3"/>
<path d="M85 324.5 L485 429.8" stroke="#ff0505" stroke-width="3.2"/><path d="M480.4 421.5 L486.5 430.7 L477.6 436" fill="none" stroke="#ff0505" stroke-width="3.2" stroke-linecap="butt" stroke-linejoin="miter"/>
</svg>
</body></html>
